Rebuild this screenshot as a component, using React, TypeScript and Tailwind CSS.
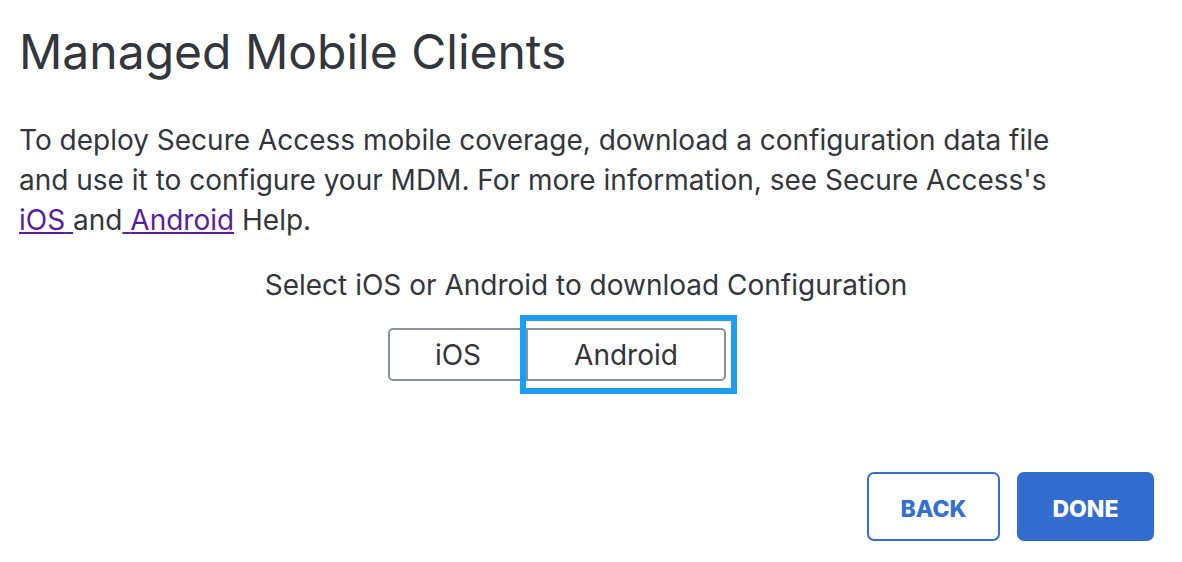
export default function App() {
  return (
    <div
      className="flex h-[562px] w-[1182px] flex-col bg-white px-[19px] text-[#33363d]"
      style={{ fontFamily: "Inter, 'Noto Sans', sans-serif" }}
    >
      <h1 className="mt-[22px] text-[48px] leading-[60px] font-normal">Managed Mobile Clients</h1>

      <p className="mt-[38px] w-[1060px] text-[28px] leading-[40px]">
        To deploy Secure Access mobile coverage, download a configuration data file and use it to configure your MDM.
        For more information, see Secure Access's{" "}
        <a href="#" className="text-[#5a1d9c] underline">
          iOS{" "}
        </a>
        and
        <a href="#" className="text-[#5a1d9c] underline">
          {" "}Android
        </a>{" "}
        Help.
      </p>

      <div className="mt-[25px] pr-[10px] text-center text-[28px] leading-[40px]">
        Select iOS or Android to download Configuration
      </div>

      <div className="mt-[23px] flex justify-center pr-[68px]">
        <div className="flex">
          <button
            type="button"
            className="h-[53px] w-[140px] rounded-l-[5px] border-2 border-[#8b9199] text-[28px]"
          >
            iOS
          </button>
          <button
            type="button"
            className="relative -ml-[2px] h-[53px] w-[200px] rounded-r-[5px] border-2 border-[#8b9199] text-[28px]"
          >
            Android
            <span className="pointer-events-none absolute -top-[15px] -right-[13px] -bottom-[15px] -left-[8px] border-[6px] border-[#1e9ef3]" />
          </button>
        </div>
      </div>

      <div className="mt-auto mb-[21px] flex justify-end gap-[17px] pr-[9px]">
        <button
          type="button"
          className="h-[69px] w-[133px] rounded-[7px] border-2 border-[#3470d0] pt-[6px] text-[23px] font-extrabold text-[#3470d0]"
        >
          BACK
        </button>
        <button
          type="button"
          className="h-[69px] w-[137px] rounded-[7px] bg-[#326ccf] pt-[6px] text-[23px] font-extrabold text-white"
        >
          DONE
        </button>
      </div>
    </div>
  );
}
